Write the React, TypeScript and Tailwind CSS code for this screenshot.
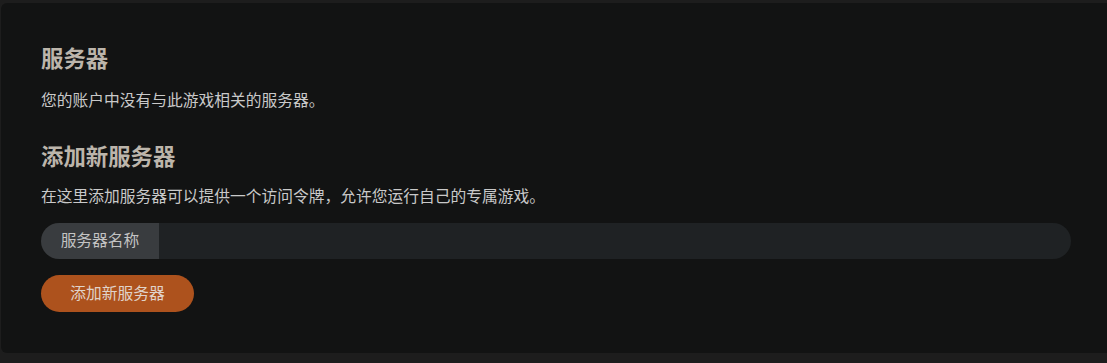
export default function App() {
  return (
    <div className="w-[1107px] h-[363px] bg-[#1d1d1d] overflow-hidden pt-[3px] pl-[1px]" style={{ fontFamily: '"Noto Sans", "Noto Sans CJK SC", sans-serif' }}>
      <div className="w-[1112px] h-[350px] bg-[#121313] rounded-md pl-[40px] pr-[41px] pt-[41px]">
        <h2 className="text-[22.4px] leading-[30px] font-bold text-[#bcb5ab]">服务器</h2>
        <p className="mt-[14px] text-[15.75px] leading-[24px] text-[#c9c9c9]">您的账户中没有与此游戏相关的服务器。</p>
        <h2 className="mt-[30px] text-[22.4px] leading-[30px] font-bold text-[#bcb5ab]">添加新服务器</h2>
        <p className="mt-[12px] text-[15.75px] leading-[24px] text-[#c9c9c9]">在这里添加服务器可以提供一个访问令牌，允许您运行自己的专属游戏。</p>
        <div className="mt-[15px] flex h-[36px] w-[1030px] rounded-full overflow-hidden">
          <div className="w-[118px] bg-[#393c3f] flex items-center justify-center text-[15.75px] text-[#c3c3c3]">服务器名称</div>
          <input className="flex-1 bg-[#1f2224] outline-none px-3 text-[15px] text-[#ddd]" />
        </div>
        <button className="mt-[16px] h-[37px] w-[153px] rounded-full bg-[#ad521d] text-[15.75px] text-[#e0d3ca] flex items-center justify-center">添加新服务器</button>
      </div>
    </div>
  );
}
